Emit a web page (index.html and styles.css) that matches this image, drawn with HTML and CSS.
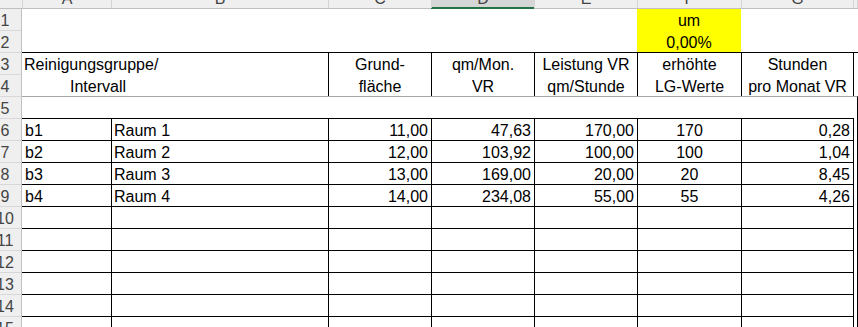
FILE: index.html
```html
<!DOCTYPE html>
<html lang="de">
<head>
<meta charset="utf-8">
<title>Reinigungsgruppen</title>
<link rel="stylesheet" href="styles.css">
</head>
<body>
<div class="sheet">
  <!-- column header -->
  <div class="ch corner"></div>
  <div class="ch">A</div>
  <div class="ch">B</div>
  <div class="ch">C</div>
  <div class="ch sel">D</div>
  <div class="ch">E</div>
  <div class="ch">F</div>
  <div class="ch">G</div>
  <div class="ch"></div>
  <div class="ch"></div>

  <!-- row 1 -->
  <div class="rh first">1</div>
  <div class="c hl"></div>
  <div class="c hl"></div>
  <div class="c hl"></div>
  <div class="c hl hlsel"></div>
  <div class="c hl"></div>
  <div class="c hl yellow ctr">um</div>
  <div class="c hl"></div>
  <div class="c hl"></div>
  <div class="c hl"></div>

  <!-- row 2 -->
  <div class="rh">2</div>
  <div class="c"></div>
  <div class="c"></div>
  <div class="c"></div>
  <div class="c"></div>
  <div class="c"></div>
  <div class="c yellow ctr">0,00%</div>
  <div class="c"></div>
  <div class="c"></div>
  <div class="c"></div>

  <!-- row 3 -->
  <div class="rh">3</div>
  <div class="c bt head-a">Reinigungsgruppe/</div>
  <div class="c bt"></div>
  <div class="c bt bl ctr">Grund-</div>
  <div class="c bt bl ctr">qm/Mon.</div>
  <div class="c bt bl ctr">Leistung VR</div>
  <div class="c bt bl ctr">erhöhte</div>
  <div class="c bt bl ctr">Stunden</div>
  <div class="c bt bl"></div>
  <div class="c bt"></div>

  <!-- row 4 -->
  <div class="rh">4</div>
  <div class="c head-b">Intervall</div>
  <div class="c"></div>
  <div class="c bl ctr">fläche</div>
  <div class="c bl ctr">VR</div>
  <div class="c bl ctr">qm/Stunde</div>
  <div class="c bl ctr">LG-Werte</div>
  <div class="c bl ctr">pro Monat VR</div>
  <div class="c bl"></div>
  <div class="c"></div>

  <!-- row 5 -->
  <div class="rh">5</div>
  <div class="c bg"></div>
  <div class="c bg"></div>
  <div class="c bg"></div>
  <div class="c bg"></div>
  <div class="c bg"></div>
  <div class="c bg"></div>
  <div class="c bg"></div>
  <div class="c bg"></div>
  <div class="c bg bl"></div>

  <!-- row 6 -->
  <div class="rh">6</div>
  <div class="c bt txt-a">b1</div>
  <div class="c bt bl txt-b">Raum 1</div>
  <div class="c bt bl num">11,00</div>
  <div class="c bt bl num">47,63</div>
  <div class="c bt bl num">170,00</div>
  <div class="c bt bl ctr">170</div>
  <div class="c bt bl num">0,28</div>
  <div class="c bl"></div>
  <div class="c bt bl"></div>

  <!-- row 7 -->
  <div class="rh">7</div>
  <div class="c bt txt-a">b2</div>
  <div class="c bt bl txt-b">Raum 2</div>
  <div class="c bt bl num">12,00</div>
  <div class="c bt bl num">103,92</div>
  <div class="c bt bl num">100,00</div>
  <div class="c bt bl ctr">100</div>
  <div class="c bt bl num">1,04</div>
  <div class="c bl"></div>
  <div class="c bt bl"></div>

  <!-- row 8 -->
  <div class="rh">8</div>
  <div class="c bt txt-a">b3</div>
  <div class="c bt bl txt-b">Raum 3</div>
  <div class="c bt bl num">13,00</div>
  <div class="c bt bl num">169,00</div>
  <div class="c bt bl num">20,00</div>
  <div class="c bt bl ctr">20</div>
  <div class="c bt bl num">8,45</div>
  <div class="c bl"></div>
  <div class="c bt bl"></div>

  <!-- row 9 -->
  <div class="rh">9</div>
  <div class="c bt txt-a">b4</div>
  <div class="c bt bl txt-b">Raum 4</div>
  <div class="c bt bl num">14,00</div>
  <div class="c bt bl num">234,08</div>
  <div class="c bt bl num">55,00</div>
  <div class="c bt bl ctr">55</div>
  <div class="c bt bl num">4,26</div>
  <div class="c bl"></div>
  <div class="c bt bl"></div>

  <!-- rows 10-15 -->
  <div class="rh">10</div>
  <div class="c bt"></div><div class="c bt bl"></div><div class="c bt bl"></div><div class="c bt bl"></div><div class="c bt bl"></div><div class="c bt bl"></div><div class="c bt bl"></div><div class="c bl"></div><div class="c bt bl"></div>
  <div class="rh">11</div>
  <div class="c bt"></div><div class="c bt bl"></div><div class="c bt bl"></div><div class="c bt bl"></div><div class="c bt bl"></div><div class="c bt bl"></div><div class="c bt bl"></div><div class="c bl"></div><div class="c bt bl"></div>
  <div class="rh">12</div>
  <div class="c bt"></div><div class="c bt bl"></div><div class="c bt bl"></div><div class="c bt bl"></div><div class="c bt bl"></div><div class="c bt bl"></div><div class="c bt bl"></div><div class="c bl"></div><div class="c bt bl"></div>
  <div class="rh">13</div>
  <div class="c bt"></div><div class="c bt bl"></div><div class="c bt bl"></div><div class="c bt bl"></div><div class="c bt bl"></div><div class="c bt bl"></div><div class="c bt bl"></div><div class="c bl"></div><div class="c bt bl"></div>
  <div class="rh">14</div>
  <div class="c bt"></div><div class="c bt bl"></div><div class="c bt bl"></div><div class="c bt bl"></div><div class="c bt bl"></div><div class="c bt bl"></div><div class="c bt bl"></div><div class="c bl"></div><div class="c bt bl"></div>
  <div class="rh">15</div>
  <div class="c bt"></div><div class="c bt bl"></div><div class="c bt bl"></div><div class="c bt bl"></div><div class="c bt bl"></div><div class="c bt bl"></div><div class="c bt bl"></div><div class="c bl"></div><div class="c bt bl"></div>
</div>
</body>
</html>
```

FILE: styles.css
```css
html, body {
  margin: 0;
  padding: 0;
  background: #ffffff;
  overflow: hidden;
}

.sheet {
  display: grid;
  grid-template-columns: 22px 89px 217px 103px 103px 103px 104px 112px 4px 1px;
  grid-template-rows: 8px repeat(15, 22px);
  width: 858px;
  height: 327px;
  overflow: hidden;
  font-family: "Liberation Sans", Arial, sans-serif;
  font-size: 16px;
  line-height: 17px;
  color: #000000;
}

/* column header */
.ch {
  box-sizing: border-box;
  background: #efefef;
  border-left: 1px solid #d4d4d4;
  color: #444444;
  display: flex;
  align-items: flex-end;
  justify-content: center;
  padding-bottom: 1px;
  overflow: hidden;
}
.ch.corner {
  border-left: none;
}
.ch.sel {
  background: #d6d6d6;
  box-shadow: inset 0 -1px 0 #217346;
}

/* row header */
.rh {
  box-sizing: border-box;
  background: #efefef;
  border-top: 1px solid #d8d8d8;
  border-right: 1px solid #c0c0c0;
  color: #444444;
  display: flex;
  align-items: flex-end;
  justify-content: center;
  padding: 0 11px 1px 0;
  white-space: nowrap;
}
.rh.first {
  border-top-color: #c0c0c0;
}

/* cells */
.c {
  box-sizing: border-box;
  display: flex;
  align-items: flex-end;
  padding: 0 3px 1px 3px;
  white-space: nowrap;
  min-width: 0;
}

.hl { border-top: 1px solid #c0c0c0; }
.hlsel { border-top-color: #217346; }
.bt { border-top: 1px solid #000000; }
.bg { border-top: 1px solid #a6a6a6; }
.bl { border-left: 1px solid #000000; }

.yellow { background: #ffff00; }

.ctr { justify-content: center; }
.num { justify-content: flex-end; }

.head-a { padding-left: 2px; }
.head-b { padding-left: 48px; }
.txt-a { padding-left: 3px; }
.txt-b { padding-left: 2px; }
```
